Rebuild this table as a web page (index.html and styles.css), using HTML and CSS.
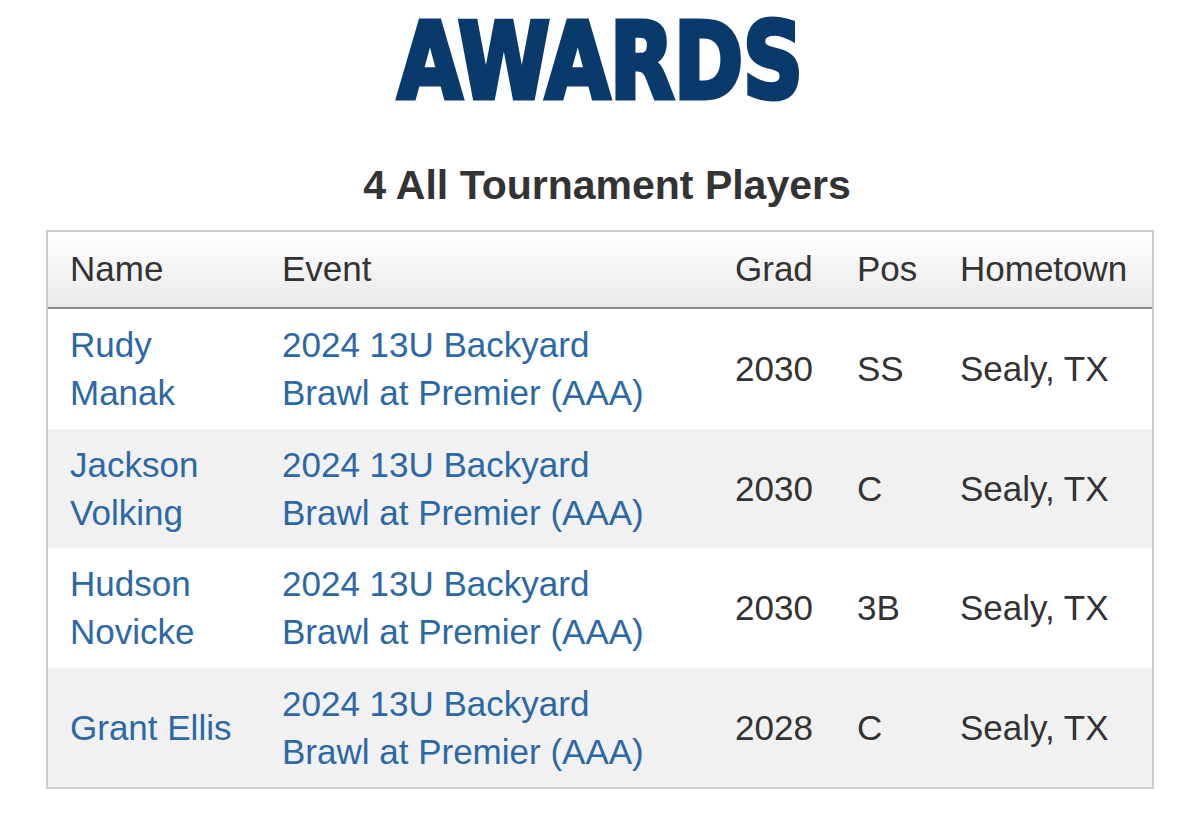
FILE: index.html
```html
<!DOCTYPE html>
<html lang="en">
<head>
<meta charset="utf-8">
<title>Awards</title>
<link rel="stylesheet" href="styles.css">
</head>
<body>
<main class="page">
  <h1 class="awards-title"><span class="awards-text">AWARDS</span></h1>
  <h2 class="section-title">4 All Tournament Players</h2>
  <div class="table-wrap">
    <table class="players">
      <colgroup>
        <col class="col-name">
        <col class="col-event">
        <col class="col-grad">
        <col class="col-pos">
        <col class="col-town">
      </colgroup>
      <thead>
        <tr>
          <th>Name</th>
          <th class="event">Event</th>
          <th>Grad</th>
          <th>Pos</th>
          <th>Hometown</th>
        </tr>
      </thead>
      <tbody>
        <tr>
          <td><a href="#">Rudy Manak</a></td>
          <td class="event"><a href="#">2024 13U Backyard Brawl at Premier (AAA)</a></td>
          <td>2030</td>
          <td>SS</td>
          <td>Sealy, TX</td>
        </tr>
        <tr>
          <td><a href="#">Jackson Volking</a></td>
          <td class="event"><a href="#">2024 13U Backyard Brawl at Premier (AAA)</a></td>
          <td>2030</td>
          <td>C</td>
          <td>Sealy, TX</td>
        </tr>
        <tr>
          <td><a href="#">Hudson Novicke</a></td>
          <td class="event"><a href="#">2024 13U Backyard Brawl at Premier (AAA)</a></td>
          <td>2030</td>
          <td>3B</td>
          <td>Sealy, TX</td>
        </tr>
        <tr>
          <td><a href="#">Grant Ellis</a></td>
          <td class="event"><a href="#">2024 13U Backyard Brawl at Premier (AAA)</a></td>
          <td>2028</td>
          <td>C</td>
          <td>Sealy, TX</td>
        </tr>
      </tbody>
    </table>
  </div>
</main>
</body>
</html>
```
FILE: styles.css
```css
html, body {
  margin: 0;
  padding: 0;
  background: #ffffff;
}

body {
  font-family: "Liberation Sans", Arial, Helvetica, sans-serif;
  color: #333333;
}

.page {
  width: 1108px;
  margin: 0 auto;
  display: flex;
  flex-direction: column;
  align-items: center;
}

.awards-title {
  margin: 8px 0 0 0;
  font-family: "DejaVu Sans Condensed", "DejaVu Sans", sans-serif;
  font-stretch: condensed;
  font-weight: 700;
  font-size: 106px;
  line-height: 108px;
  color: #0a3a6b;
  display: flex;
  justify-content: center;
}

.awards-text {
  display: inline-block;
  letter-spacing: 0;
  -webkit-text-stroke: 5px #0a3a6b;
  transform: scaleX(0.872);
  transform-origin: center;
}

.section-title {
  margin: 45px 0 21px 14px;
  font-size: 41px;
  line-height: 48px;
  font-weight: 700;
  color: #333333;
}

.table-wrap {
  width: 1104px;
  border: 2px solid #cccccc;
}

.players {
  width: 100%;
  border-collapse: collapse;
  table-layout: fixed;
  font-size: 35px;
  line-height: 48px;
}

.col-name { width: 212px; }
.col-event { width: 453px; }
.col-grad { width: 122px; }
.col-pos { width: 103px; }
.col-town { width: 214px; }

.players th {
  text-align: left;
  font-weight: 400;
  color: #333333;
  padding: 13px 8px 14px 22px;
  background: linear-gradient(#ffffff, #e9e9e9);
  border-bottom: 2px solid #8c8c8c;
}

.players td {
  padding: 12px 8px 11.5px 22px;
  vertical-align: middle;
  color: #333333;
}

.players td.event,
.players th.event {
  padding-right: 40px;
}

.players tbody tr:nth-child(even) td {
  background: #f1f1f1;
}

.players a {
  color: #2b68a6;
  text-decoration: none;
}
```
